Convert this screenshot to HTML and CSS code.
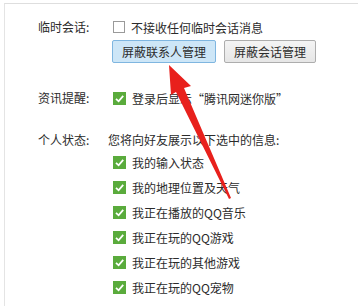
FILE: index.html
```html
<!DOCTYPE html>
<html lang="zh-CN">
<head>
<meta charset="utf-8">
<link rel="stylesheet" href="styles.css">
</head>
<body>
<div class="frame">
  <div class="row">
    <div class="label">临时会话:</div>
    <div class="content">
      <div class="opt"><span class="cb"></span><span>不接收任何临时会话消息</span></div>
      <div class="buttons">
        <button class="btn btn-active">屏蔽联系人管理</button>
        <button class="btn">屏蔽会话管理</button>
      </div>
    </div>
  </div>
  <div class="row row-news">
    <div class="label">资讯提醒:</div>
    <div class="content">
      <div class="opt"><span class="cb on"><svg viewBox="0 0 13 13"><path d="M3 6.8 L5.6 9.3 L10.2 3.8" fill="none" stroke="#fff" stroke-width="1.8"/></svg></span><span>登录后显示“腾讯网迷你版”</span></div>
    </div>
  </div>
  <div class="row row-status">
    <div class="label">个人状态:</div>
    <div class="content">
      <div class="intro">您将向好友展示以下选中的信息:</div>
      <div class="opt item"><span class="cb on"><svg viewBox="0 0 13 13"><path d="M3 6.8 L5.6 9.3 L10.2 3.8" fill="none" stroke="#fff" stroke-width="1.8"/></svg></span><span>我的输入状态</span></div>
      <div class="opt item"><span class="cb on"><svg viewBox="0 0 13 13"><path d="M3 6.8 L5.6 9.3 L10.2 3.8" fill="none" stroke="#fff" stroke-width="1.8"/></svg></span><span>我的地理位置及天气</span></div>
      <div class="opt item"><span class="cb on"><svg viewBox="0 0 13 13"><path d="M3 6.8 L5.6 9.3 L10.2 3.8" fill="none" stroke="#fff" stroke-width="1.8"/></svg></span><span>我正在播放的QQ音乐</span></div>
      <div class="opt item"><span class="cb on"><svg viewBox="0 0 13 13"><path d="M3 6.8 L5.6 9.3 L10.2 3.8" fill="none" stroke="#fff" stroke-width="1.8"/></svg></span><span>我正在玩的QQ游戏</span></div>
      <div class="opt item"><span class="cb on"><svg viewBox="0 0 13 13"><path d="M3 6.8 L5.6 9.3 L10.2 3.8" fill="none" stroke="#fff" stroke-width="1.8"/></svg></span><span>我正在玩的其他游戏</span></div>
      <div class="opt item"><span class="cb on"><svg viewBox="0 0 13 13"><path d="M3 6.8 L5.6 9.3 L10.2 3.8" fill="none" stroke="#fff" stroke-width="1.8"/></svg></span><span>我正在玩的QQ宠物</span></div>
    </div>
  </div>
</div>
<svg class="arrow" width="358" height="306" viewBox="0 0 358 306">
  <polygon points="169,65 191,86 184,88 231,198 229,199 176,92 171,95" fill="#e8201c"/>
</svg>
</body>
</html>
```
FILE: styles.css
```css
* { box-sizing: border-box; }
html, body { margin: 0; padding: 0; background: #fff; }
body {
  width: 358px;
  height: 306px;
  overflow: hidden;
  position: relative;
  font-family: "Noto Sans CJK SC", "Noto Sans", sans-serif;
  font-size: 12px;
  color: #2b2b2b;
}
.frame {
  margin: 3px 0 0 4px;
  height: 303px;
  border-top: 1px solid #dedede;
  border-left: 1px solid #e4e4e4;
  padding-top: 13px;
}
.row { display: flex; }
.label {
  width: 103px;
  padding-left: 33px;
  line-height: 20px;
  flex: none;
}
.content { display: flex; flex-direction: column; }
.opt {
  display: flex;
  align-items: center;
  height: 20px;
  padding-left: 5px;
  gap: 6px;
  white-space: nowrap;
}
.cb {
  width: 12px;
  height: 12px;
  border: 1px solid #9a9a9a;
  background: #fff;
  flex: none;
  display: flex;
}
.cb.on {
  width: 13px;
  height: 13px;
  border: none;
  background: #5aab3c;
}
.cb svg { width: 13px; height: 13px; display: block; }
.buttons {
  display: flex;
  gap: 8px;
  margin-top: 3px;
  padding-left: 4px;
}
.btn {
  font-family: inherit;
  font-size: 12px;
  color: #2b2b2b;
  height: 23px;
  padding: 0 9px;
  border: 1px solid #adadad;
  border-radius: 2px;
  background: linear-gradient(#f4f4f4, #e6e6e6);
  line-height: 21px;
}
.btn-active {
  background: #cde6f7;
  border-color: #7fb6e0;
}
.row-news { margin-top: 25px; }
.row-status { margin-top: 22px; }
.intro { line-height: 20px; white-space: nowrap; }
.item { margin-top: 5px; }
.intro + .item { margin-top: 2px; }
.arrow { position: absolute; left: 0; top: 0; pointer-events: none; }
```
